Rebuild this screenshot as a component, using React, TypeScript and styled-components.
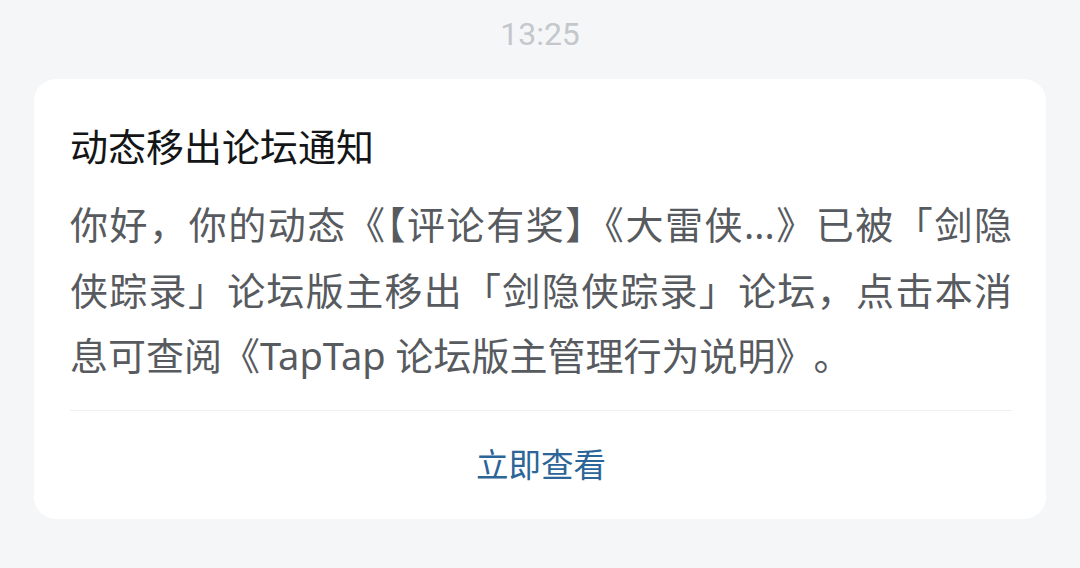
import React from 'react'
import styled, { createGlobalStyle } from 'styled-components'

const GlobalStyle = createGlobalStyle`
  html, body {
    margin: 0;
    padding: 0;
    background: #f5f6f8;
  }
  body {
    font-family: 'Noto Sans', 'Noto Sans CJK SC', sans-serif;
    -webkit-font-smoothing: antialiased;
  }
`

const Page = styled.div`
  width: 1080px;
  height: 568px;
  box-sizing: border-box;
  padding: 14px 34px 0;
  display: flex;
  flex-direction: column;
  align-items: stretch;
`

const Time = styled.div`
  font-family: 'Roboto', 'Noto Sans', sans-serif;
  font-size: 32px;
  line-height: 40px;
  color: #c4c7cb;
  text-align: center;
  margin-bottom: 25px;
`

const Card = styled.div`
  background: #ffffff;
  border-radius: 22px;
  padding: 0 34px 0 36px;
  display: flex;
  flex-direction: column;
`

const Title = styled.div`
  font-family: 'Noto Sans CJK SC', sans-serif;
  font-size: 38px;
  line-height: 50px;
  font-weight: 400;
  color: #141517;
  padding-top: 41px;
`

const Body = styled.p`
  margin: 22px 0 0;
  font-size: 38px;
  line-height: 65.5px;
  color: #575a5e;
  text-align: justify;
  text-spacing-trim: normal;
`

const Loose = styled.span`
  text-spacing-trim: space-all;
`

const Divider = styled.hr`
  border: none;
  height: 1px;
  background: #eff0f2;
  margin: 21px 0 0;
`

const Action = styled.button`
  border: none;
  background: none;
  padding: 0 0 4px;
  height: 108px;
  font-family: 'Noto Sans CJK SC', sans-serif;
  font-size: 32.5px;
  color: #2c6597;
  cursor: pointer;
  display: flex;
  align-items: center;
  justify-content: center;
`

export default function App() {
  return (
    <>
      <GlobalStyle />
      <Page>
        <Time>13:25</Time>
        <Card>
          <Title>动态移出论坛通知</Title>
          <Body>
            你好，你的动态《【评论有奖】《大雷侠...》已被「剑隐侠踪录」论坛版主移出「剑隐侠踪录」论坛，点击本消息可查阅
            <Loose>《TapTap 论坛版主管理行为说明》。</Loose>
          </Body>
          <Divider />
          <Action>立即查看</Action>
        </Card>
      </Page>
    </>
  )
}
